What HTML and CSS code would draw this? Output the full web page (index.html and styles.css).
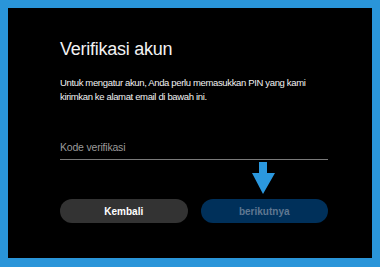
FILE: index.html
```html
<!DOCTYPE html>
<html lang="id">
<head>
    <meta charset="UTF-8">
    <meta name="viewport" content="width=device-width, initial-scale=1.0">
    <title>Verifikasi akun</title>
    <link rel="stylesheet" href="styles.css">
</head>
<body>
    <div class="dialog">
        <h1>Verifikasi akun</h1>
        <p class="intro">Untuk mengatur akun, Anda perlu memasukkan PIN yang kami kirimkan ke alamat email di bawah ini.</p>

        <div class="form-group">
            <input type="text" id="code" placeholder="Kode verifikasi">
        </div>

        <div class="actions">
            <button type="button" class="btn btn-back">Kembali</button>
            <button type="button" class="btn btn-next" disabled>berikutnya</button>
            <!-- hint arrow pointing at the next button -->
            <svg class="hint-arrow" width="24" height="33" viewBox="0 0 24 33">
                <polygon points="7,0 15,0 15,11 23,11 11,32 0,11 7,11" fill="#2b98de"/>
            </svg>
        </div>
    </div>
</body>
</html>
```

FILE: styles.css
```css
:root {
    --frame-color: #2a95d9;
    --panel-bg: #000;
    --text-color: #f2f2f2;
    --muted-color: #9a9a9a;
    --line-color: #7a7a7a;
    --back-bg: #333;
    --next-bg: #00305a;
    --next-text: #5f7791;
}

body {
    font-family: "Liberation Sans", Arial, sans-serif;
    background-color: var(--frame-color);
    margin: 0;
    padding: 8px 8px 9px;
    box-sizing: border-box;
    height: 267px;
}
.dialog {
    background-color: var(--panel-bg);
    height: 100%;
    box-sizing: border-box;
    padding: 31px 44px 0 52px;
    color: var(--text-color);
}
.dialog h1 {
    font-size: 18px;
    font-weight: normal;
    line-height: 21px;
    margin: 0 0 16px;
    letter-spacing: -0.25px;
}
.intro {
    font-size: 9.5px;
    line-height: 14px;
    letter-spacing: -0.35px;
    margin: 0 0 37px;
    width: 260px;
}
.form-group {
    border-bottom: 1px solid var(--line-color);
    width: 268px;
}
input[type="text"] {
    display: block;
    width: 100%;
    border: none;
    background: transparent;
    color: var(--text-color);
    font-family: inherit;
    font-size: 10.5px;
    line-height: 12px;
    letter-spacing: -0.2px;
    padding: 0 0 6px;
    margin: 0;
    outline: none;
}
input[type="text"]::placeholder {
    color: var(--muted-color);
}
.actions {
    position: relative;
    display: flex;
    gap: 13px;
    width: 268px;
    margin-top: 39px;
}
.btn {
    flex: 1;
    height: 24px;
    border: none;
    border-radius: 12px;
    font-family: inherit;
    font-size: 10px;
    font-weight: bold;
    padding: 0;
}
.btn-back {
    background-color: var(--back-bg);
    color: #fff;
}
.btn-next {
    background-color: var(--next-bg);
    color: var(--next-text);
}
.hint-arrow {
    position: absolute;
    left: 192px;
    top: -37px;
}
```
